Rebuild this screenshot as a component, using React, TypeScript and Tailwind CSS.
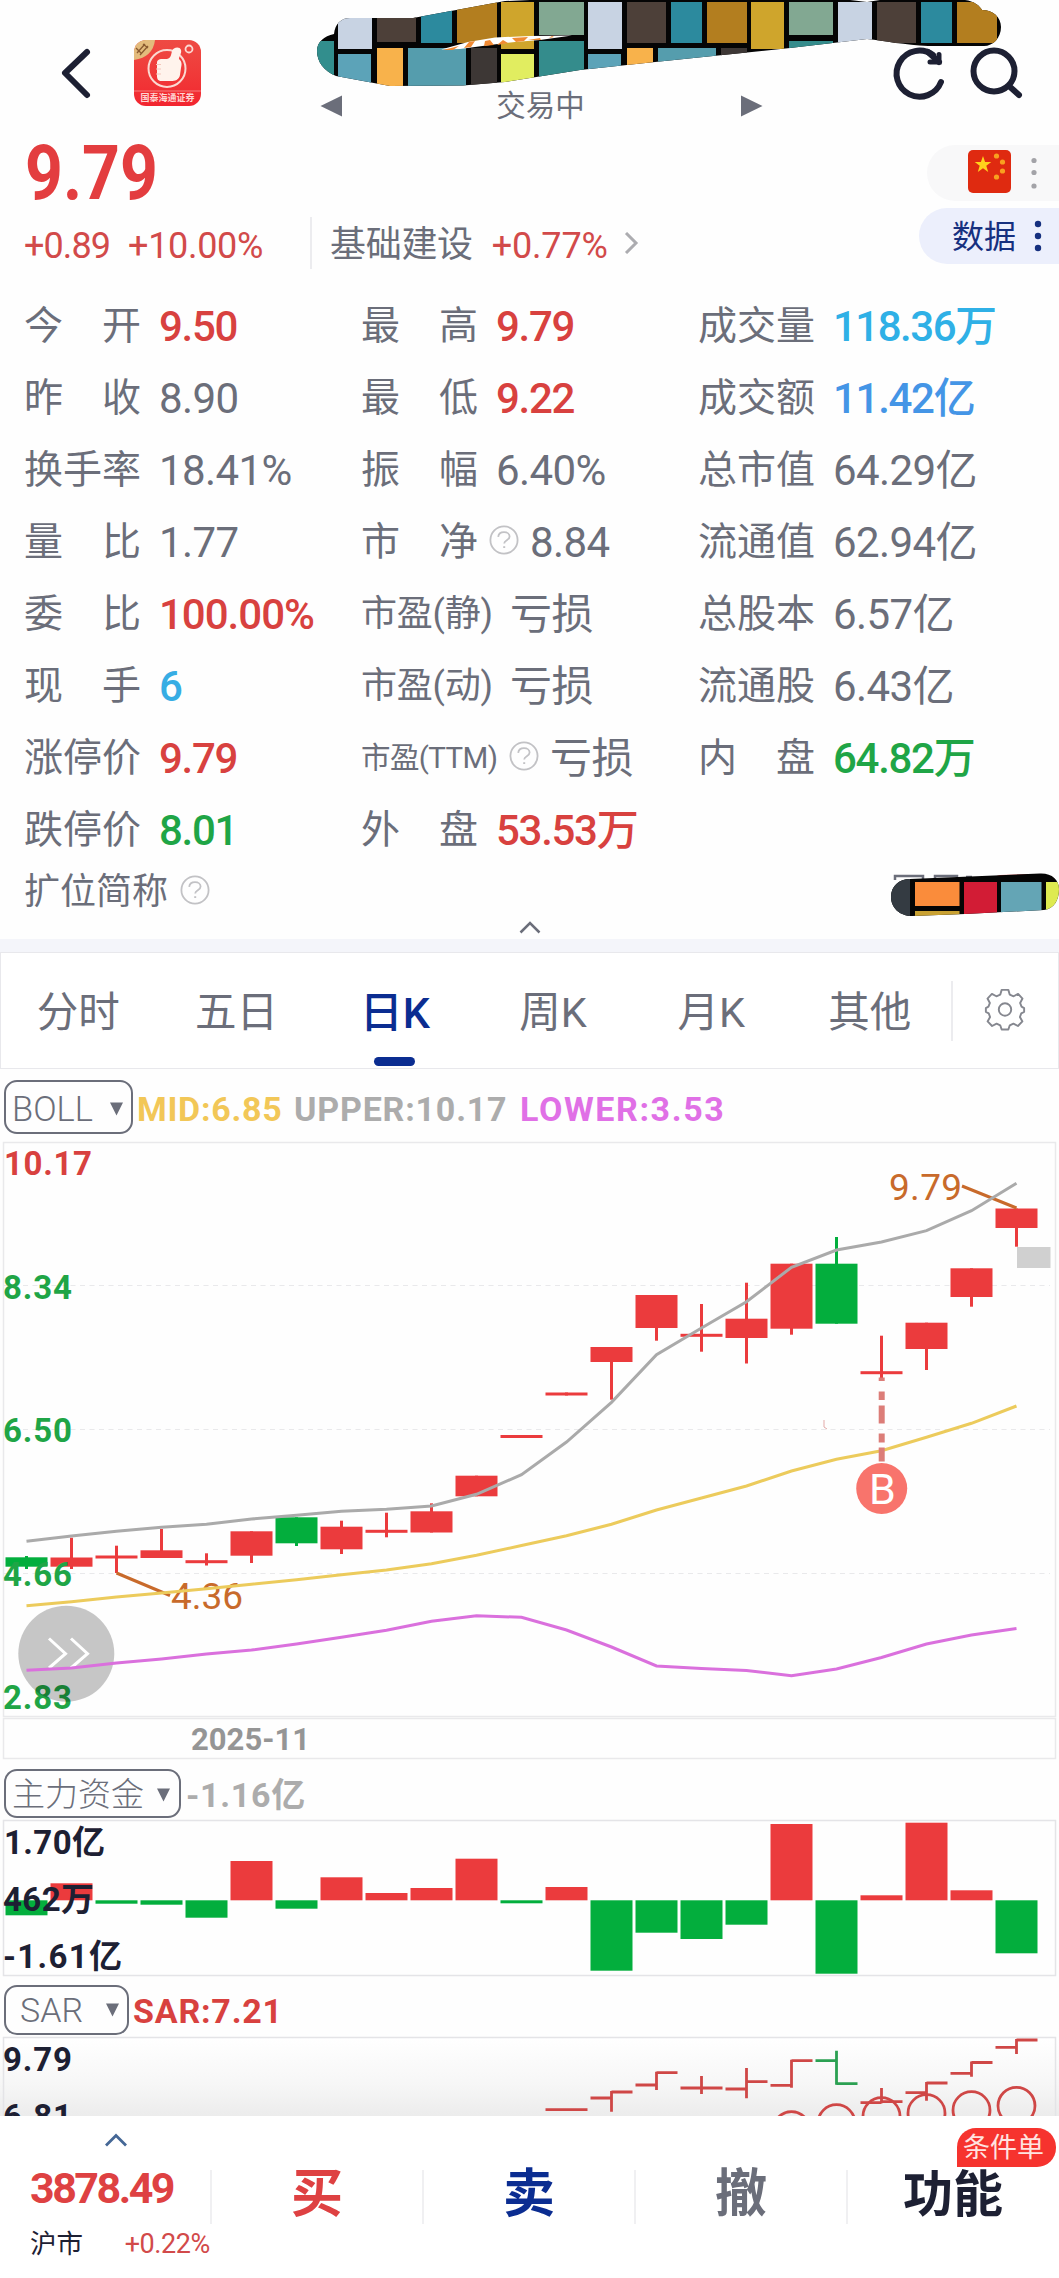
import React, { useState } from 'react';
import { clsx } from 'clsx';

const RED = '#eb3b3d';
const GREEN = '#03ae3d';

// ---------- quote data ----------
type Quote = { label: string; value: string; color?: string; help?: boolean; small?: string };

const red = 'text-[#d8413f] font-medium tracking-[-1.300px]';
const green = 'text-[#1fa546] font-medium tracking-[-1.300px]';

const quotes: Quote[][] = [
  [
    { label: '今开', value: '9.50', color: red },
    { label: '昨收', value: '8.90' },
    { label: '换手率', value: '18.41%' },
    { label: '量比', value: '1.77' },
    { label: '委比', value: '100.00%', color: 'text-[#d8413f] font-medium tracking-[-1px]' },
    { label: '现手', value: '6', color: 'text-[#37ade4] font-medium' },
    { label: '涨停价', value: '9.79', color: red },
    { label: '跌停价', value: '8.01', color: green },
  ],
  [
    { label: '最高', value: '9.79', color: red },
    { label: '最低', value: '9.22', color: red },
    { label: '振幅', value: '6.40%' },
    { label: '市净', value: '8.84', help: true },
    { label: '市盈(静)', value: '亏损', small: 'w-[131px] text-[36px] tracking-[-0.200px]' },
    { label: '市盈(动)', value: '亏损', small: 'w-[131px] text-[36px] tracking-[-0.200px]' },
    { label: '市盈(TTM)', value: '亏损', small: 'w-[137px] text-[29.500px] tracking-[-0.600px]', help: true },
    { label: '外盘', value: '53.53万', color: red },
  ],
  [
    { label: '成交量', value: '118.36万', color: 'text-[#2fb0e6] font-medium tracking-[-1.500px]' },
    { label: '成交额', value: '11.42亿', color: 'text-[#4495e6] font-medium tracking-[-1.300px]' },
    { label: '总市值', value: '64.29亿' },
    { label: '流通值', value: '62.94亿' },
    { label: '总股本', value: '6.57亿' },
    { label: '流通股', value: '6.43亿' },
    { label: '内盘', value: '64.82万', color: green },
  ],
];

// ---------- chart data, y values are in page pixels ----------
const cx = (i: number) => 26.5 + i * 45;

// [up, bodyTop, bodyBottom, wickTop, wickBottom]
const candles: [boolean, number, number, number, number][] = [
  [false, 1557.3, 1566.7, 1556, 1569],
  [true, 1557.5, 1566.7, 1537.7, 1569],
  [true, 1555.5, 1558.5, 1545.7, 1573],
  [true, 1550.3, 1558, 1529, 1558],
  [true, 1560.2, 1563.2, 1553.3, 1565.5],
  [true, 1531.3, 1555.7, 1531.3, 1563],
  [false, 1517.3, 1543.3, 1517.3, 1546],
  [true, 1526.7, 1549.3, 1520.7, 1554],
  [true, 1529.8, 1532.8, 1512.7, 1537.3],
  [true, 1511.3, 1532.5, 1503.3, 1532.5],
  [true, 1475.7, 1496.3, 1475.7, 1496.3],
  [true, 1435, 1438, 1435, 1438],
  [true, 1392.5, 1395.5, 1392.5, 1395.5],
  [true, 1347, 1362, 1347, 1399.7],
  [true, 1295, 1328, 1295, 1340.7],
  [true, 1333.8, 1336.8, 1304, 1351.7],
  [true, 1318.7, 1338, 1282.7, 1363.5],
  [true, 1263.7, 1328.7, 1263.7, 1334.7],
  [false, 1263.7, 1323.7, 1237, 1323.7],
  [true, 1371.2, 1374.2, 1335.7, 1378],
  [true, 1322.7, 1349, 1322.7, 1370],
  [true, 1268.3, 1297, 1268.3, 1306.7],
  [true, 1208.5, 1228, 1208.5, 1246.7],
];

const upper = [1541.3, 1536, 1531.3, 1527.3, 1524.3, 1519, 1515.3, 1511.3, 1509.3, 1506, 1494.3, 1474.7, 1442, 1402.3, 1354.7, 1328, 1301.7, 1267.3, 1250, 1242, 1230.7, 1210.7, 1183.3];
const mid = [1605.7, 1601.7, 1597, 1593, 1588.7, 1584.3, 1579.7, 1574.7, 1570, 1563.7, 1555.3, 1545.5, 1535.7, 1524.2, 1510, 1498, 1486, 1471, 1459.3, 1450.7, 1437.3, 1423.3, 1406];
const lower = [1670.3, 1668, 1663, 1659, 1654, 1650, 1644, 1637.3, 1630.3, 1621.3, 1615.7, 1617.3, 1630, 1647, 1666, 1668.5, 1670.6, 1675.7, 1669, 1657.5, 1644, 1635, 1628.5];

const ZERO = 1900.3;
const funds = [1915.3, 1883.3, 1903.7, 1904.7, 1917.7, 1861, 1908.7, 1877.3, 1893, 1888, 1858.7, 1903.3, 1887, 1970.7, 1932.7, 1939, 1924.7, 1824, 1973.7, 1895.3, 1822.7, 1890.3, 1953.3];

// [index, up, open, close, high, low]
const ohlc: [number, boolean, number, number, number, number][] = [
  [12, true, 2109.7, 2109.7, 2109, 2110],
  [13, true, 2098, 2092, 2091, 2111.7],
  [14, true, 2085, 2072.7, 2071.7, 2090],
  [15, true, 2088, 2088, 2076, 2094],
  [16, true, 2089, 2081.7, 2068, 2098.3],
  [17, true, 2085.3, 2060.7, 2059.7, 2087.7],
  [18, false, 2060.7, 2083.7, 2050.7, 2084.7],
  [19, true, 2102.7, 2101.7, 2088, 2103.3],
  [20, true, 2092.7, 2083, 2082, 2100.7],
  [21, true, 2073.3, 2062.5, 2061.5, 2076.7],
  [22, true, 2047.3, 2040, 2039, 2054],
];
const sar: [number, number][] = [[17, 2111.7], [18, 2104.7], [19, 2097.7], [20, 2094.7], [21, 2091.7], [22, 2087.3]];

const toPoints = (ys: number[]) => ys.map((y, i) => `${cx(i)},${y}`).join(' ');

// mosaic strip: [x1, x2, y1, y2, color]
const tiles: [number, number, number, number, string][] = [
  [310, 334, 41, 80, '#328e8d'],
  [338, 372, 10, 49, '#c8d3e3'],
  [338, 371, 54, 90, '#5ca3b8'],
  [377, 416, 10, 42, '#4d4039'],
  [377, 403, 48, 90, '#f8b24b'],
  [421, 452, 2, 43, '#2c8a9e'],
  [408, 466, 48, 90, '#559dad'],
  [457, 497, 2, 43, '#b37e1f'],
  [471, 497, 48, 90, '#3d3735'],
  [501, 534, 2, 49, '#cfa52c'],
  [501, 534, 54, 90, '#e1ed60'],
  [539, 584, 2, 35, '#82a892'],
  [539, 584, 41, 80, '#348c8c'],
  [588, 622, 2, 49, '#c8d3e3'],
  [588, 621, 54, 80, '#5ca3b8'],
  [627, 666, 2, 43, '#4d4039'],
  [627, 653, 48, 80, '#f8b24b'],
  [671, 702, 2, 43, '#2c8a9e'],
  [658, 716, 48, 80, '#559dad'],
  [707, 747, 2, 43, '#b37e1f'],
  [721, 747, 48, 80, '#3d3735'],
  [751, 784, 2, 49, '#cfa52c'],
  [789, 833, 2, 35, '#82a892'],
  [789, 833, 41, 60, '#348c8c'],
  [838, 872, 2, 49, '#c8d3e3'],
  [877, 916, 2, 43, '#4d4039'],
  [921, 952, 2, 43, '#2c8a9e'],
  [957, 997, 2, 43, '#b37e1f'],
];

function HelpIcon() {
  return (
    <svg width="30" height="30" viewBox="0 0 30 30" fill="none" stroke="#c2c2c5" strokeWidth="1.8" className="shrink-0">
      <circle cx="15" cy="15" r="13.6" />
      <path d="M9.2 11.8C9.6 8.6 12 7.2 15 7.2c3.200 0 5.600 1.700 5.600 4.300 0 3.800-5.400 3.600-5.400 7" />
      <path d="M15.200 21.200v1.800" strokeWidth="2" />
    </svg>
  );
}

function Mosaic() {
  return (
    <svg className="absolute left-0 top-0" width="1059" height="90" viewBox="0 0 1059 90">
      <clipPath id="strip">
        <path d="M317 51C317 42 324 36 334 34C335 24 341 18 350 18H413L505 1L530 0H850L867 2L880 0H965C974 1 980 6 982 10C993 10 1001 17 1001 27C1001 38 993 46 984 46H928C905 45 885 41 867 39L790 48L655 62L580 70L530 78L505 82L463 85.500L390 86L336 76C324 71 317 62 317 51Z" />
      </clipPath>
      <g clipPath="url(#strip)">
        <rect x="300" width="720" height="90" fill="#050505" />
        {tiles.map(([x1, x2, y1, y2, c]) => (
          <rect key={`${x1}-${y1}`} x={x1} y={y1} width={x2 - x1} height={y2 - y1} fill={c} />
        ))}
      </g>
      <path d="M441 49.500L468 42L495 37.500L530 36L572 35.500L540 40L515 42L490 45L460 49Z" fill="#fff" />
      <path d="M443 50l16-4-6 4zM464 48l5-6 6-1-4 6zM484 46l1-5 5-1 4 5zM497 45l6-5 5 3-5 1zM512 38l16-1-4 4-8 1zM528 40l12-2 1 2zM549 38l5-1-2-1z" fill="#f08a34" />
    </svg>
  );
}

function Header() {
  return (
    <header className="relative flex h-[128px] items-start">
      <svg className="ml-[58px] mt-[40px]" width="40" height="66" viewBox="0 0 40 66" fill="none" stroke="#1d2033" strokeWidth="6" strokeLinecap="round" strokeLinejoin="round">
        <path d="M29 12L7 33L29 55" />
      </svg>
      <div className="relative ml-[36px] mt-[40px] h-[66px] w-[67px] overflow-hidden rounded-[12px] bg-linear-to-b from-[#ee4a43] to-[#f2242f]">
        <svg width="67" height="66" viewBox="0 0 67 66">
          <path d="M0 0H21Q19 17 0 20Z" fill="#e3bb7c" />
          <path d="M3 13l8-9M6 15l8-9M2 8l5 5M9 4l5 4" stroke="#8a5a30" strokeWidth="1.300" />
          <circle cx="33" cy="28.500" r="18.500" fill="none" stroke="#fbd9d2" strokeWidth="2" />
          <path d="M23 23c0-3 2-4 5-4h5c4-1 4-4 5-8 1-4 8-5 9-1 1 3-2 6-2 9 3 3 3 5 2 9l-1 7c-1 5-5 6-9 6H28c-4 0-5-2-5-5z" fill="#fff3ec" />
          <path d="M22 24.500h5M22 29h5M22 34h5" stroke="#f3c6bb" strokeWidth="1" />
          <circle cx="55" cy="9" r="3.500" fill="none" stroke="#fbd9d2" strokeWidth="1.800" />
          <path d="M0 51H67" stroke="#f77f7c" strokeWidth="1" />
        </svg>
        <span className="absolute inset-x-0 bottom-[2px] text-center text-[9px] font-bold leading-[11px] text-[#ffd5d2]">国泰海通证券</span>
      </div>
      <div className="ml-[119px] mt-[86px] flex h-[40px] w-[443px] items-center justify-between">
        <svg width="22" height="22" viewBox="0 0 22 22"><path d="M0.500 11L22 0.500V21.500Z" fill="#6b6e7a" /></svg>
        <span className="pr-[2px] text-[29.500px] leading-[40px] text-[#6b6e7a]">交易中</span>
        <svg width="22" height="22" viewBox="0 0 22 22"><path d="M21.500 11L0 0.500V21.500Z" fill="#6b6e7a" /></svg>
      </div>
      <svg className="ml-[125px] mt-[42px]" width="150" height="62" viewBox="0 0 150 62" fill="none" stroke="#1d2033" strokeWidth="6" strokeLinecap="round">
        <path d="M53 40A23 23 0 1 1 45 13" />
        <path d="M51 12.500V20H42" strokeLinecap="round" strokeLinejoin="miter" strokeWidth="5" />
        <path d="M40 10L51 20" strokeWidth="6" />
        <circle cx="106" cy="29" r="20.500" />
        <path d="M121 44L131 53" />
      </svg>
      <Mosaic />
    </header>
  );
}

function Summary() {
  return (
    <section className="flex h-[160px] justify-between">
      <div>
        <div className="ml-[25px] h-[84px] origin-left scale-x-[0.87] text-[76px] font-bold leading-[90px] text-[#e33d3f]">9.79</div>
        <div className="ml-[24px] mt-[5px] flex h-[52px] items-center text-[36px] leading-[52px] tracking-[-0.900px] text-[#d24a4a]">
          <span className="w-[104px] pt-[5px]">+0.89</span>
          <span className="w-[182px] pt-[5px] tracking-[-0.300px]">+10.00%</span>
          <span className="h-[52px] w-[2px] bg-[#ececef]" />
          <span className="ml-[18px] pt-[4px] text-[36px] tracking-[-0.300px] text-[#6b6e7a]">基础建设</span>
          <span className="ml-[19px] pt-[5px] tracking-[-0.200px]">+0.77%</span>
          <svg className="ml-[15px]" width="16" height="22" viewBox="0 0 16 22" fill="none" stroke="#acacb0" strokeWidth="3"><path d="M3 1L13 11L3 21" /></svg>
        </div>
      </div>
      <div className="flex flex-col items-end gap-[7px] pt-[17px]">
        <div className="flex h-[56px] w-[132px] items-center rounded-l-full bg-[#f8f8f9] pl-[41px]">
          <svg className="-mt-[3px]" width="43" height="43" viewBox="0 0 43 43">
            <rect width="43" height="43" rx="5" fill="#df2a10" />
            <path d="M15 6l2.100 6h6.200l-5 3.800 1.900 6.200-5.200-3.700-5.200 3.700 1.900-6.200-5-3.800h6.200z" fill="#ffd21c" />
            <g fill="#f9a01f">
              <circle cx="28.500" cy="6" r="2.600" /><circle cx="34.500" cy="12" r="2.600" /><circle cx="34.500" cy="21" r="2.600" /><circle cx="28.500" cy="27" r="2.600" />
            </g>
          </svg>
          <svg className="ml-[19px]" width="8" height="32" viewBox="0 0 8 32" fill="#a3a3a8"><circle cx="4" cy="3.500" r="2.600" /><circle cx="4" cy="15.500" r="2.600" /><circle cx="4" cy="29" r="2.600" /></svg>
        </div>
        <div className="flex h-[56px] w-[140px] items-center rounded-l-full bg-[#eceffc] pl-[33px]">
          <span className="pt-[1px] text-[32px] leading-[56px] text-[#16307f]">数据</span>
          <svg className="ml-[18px]" width="8" height="32" viewBox="0 0 8 32" fill="#16307f"><circle cx="4" cy="4" r="3.200" /><circle cx="4" cy="16" r="3.200" /><circle cx="4" cy="28" r="3.200" /></svg>
        </div>
      </div>
    </section>
  );
}

function QuoteCell({ q }: { q: Quote }) {
  return (
    <div className="flex h-[72px] items-center text-[#6b6e7a]">
      {q.small ? (
        <span className={clsx('whitespace-nowrap pt-[4px]', q.small)}>{q.label}</span>
      ) : (
        <span className="flex w-[117px] justify-between pt-[4px] text-[39px]">
          {q.label.split('').map(ch => <span key={ch}>{ch}</span>)}
        </span>
      )}
      {q.help && <span className="ml-[11px]"><HelpIcon /></span>}
      <span className={clsx('whitespace-nowrap pt-[4px] text-[42px]', q.help ? 'ml-[11px]' : 'ml-[18px]', q.color || 'tracking-[-0.600px]')}>{q.value}</span>
    </div>
  );
}

function Tabs() {
  const [active, setActive] = useState('日K');
  return (
    <nav className="flex h-[117px] items-center border border-[#e8e8ec] bg-white">
      {['分时', '五日', '日K', '周K', '月K', '其他'].map(t => (
        <button
          key={t}
          onClick={() => setActive(t)}
          className={clsx('relative h-full w-[158.300px] pr-[4px] pt-[5px]', t === active ? 'text-[43px] font-medium text-[#0b2d91]' : 'text-[41.500px] text-[#6b6e7a]')}
        >
          {t}
          {t === active && <span className="absolute bottom-[2px] left-[56px] h-[9px] w-[41px] rounded-full bg-[#0b2d91]" />}
        </button>
      ))}
      <span className="h-[60px] w-[2px] bg-[#ececef]" />
      <svg className="-mt-[3px] ml-[30px]" width="44" height="44" viewBox="0 0 46 46" fill="none" stroke="#85878f" strokeWidth="2" strokeLinejoin="round">
        <path d="M19.500 3h7l1.500 5 4 1.700 4.700-2.500 4.600 4.900-2.500 4.600 1.500 3.800 2.700 1.500v4l-3 1.500-1.400 3.900 2.600 4.600-4.700 4.800-4.700-2.500-3.800 1.700-1.500 4.500h-7l-1.500-4.500-3.800-1.700-4.700 2.500-4.700-4.800 2.600-4.600-1.400-3.900-3-1.500v-4l2.700-1.500 1.500-3.800-2.500-4.600 4.600-4.900 4.700 2.500 4-1.700z" />
        <circle cx="23" cy="23.500" r="6.500" />
      </svg>
    </nav>
  );
}

function Picker({ label, className }: { label: string; className: string }) {
  return (
    <button className={clsx('flex items-center justify-between rounded-[13px] border-2 border-[#6b6e7a] text-[#6b6e7a]', className)}>
      <span>{label}</span>
      <svg width="13" height="14" viewBox="0 0 13 14" fill="#6b6e7a"><path d="M0 0.500H13L6.500 13.500Z" /></svg>
    </button>
  );
}

function KChart() {
  return (
    <svg className="block" width="1059" height="626" viewBox="0 1137 1059 626">
      <g fill="none" stroke="#e9e9eb" strokeWidth="1.500">
        <rect x="3.500" y="1142.500" width="1052" height="574" />
        <rect x="3.500" y="1718.500" width="1052" height="40" />
        <path d="M4 1285.500H1050M4 1429.500H1050M4 1573.500H1050" strokeDasharray="5 4.500" strokeWidth="1" />
      </g>
      {candles.map(([up, top, bottom, high, low], i) => (
        <g key={i} fill={up ? RED : GREEN}>
          <rect x={cx(i) - 1.500} y={high} width="3" height={low - high} />
          <rect x={cx(i) - 21} y={top} width="42" height={bottom - top} />
        </g>
      ))}
      <g fontSize="33" fontWeight="700" fill="#1fa546">
        <text x="4" y="1175" fill="#d8413f" textLength="88">10.17</text>
        <text x="3" y="1298.500" textLength="69">8.34</text>
        <text x="3" y="1441.500" textLength="69">6.50</text>
        <text x="3" y="1585.500" textLength="69">4.66</text>
        <text x="3" y="1708.500" textLength="69">2.83</text>
      </g>
      <g fontSize="37" fill="#c86a2b">
        <text x="889" y="1199.500" textLength="73">9.79</text>
        <text x="171" y="1608.500" textLength="72">4.36</text>
        <path d="M962 1186L1016.500 1208M116.500 1573L170 1595.500" stroke="#c86a2b" strokeWidth="3" />
      </g>
      <rect x="1017" y="1247" width="33.500" height="21" fill="#d0d0d0" />
      <circle cx="66.300" cy="1653.700" r="48" fill="#000" fillOpacity="0.220" />
      <path d="M49 1638.500L65.500 1653.700L49 1668M71 1638.500L87.500 1653.700L71 1668" fill="none" stroke="#fff" strokeWidth="3" />
      <g fill="none" strokeWidth="3">
        <polyline points={toPoints(upper)} stroke="#aaaaaa" />
        <polyline points={toPoints(mid)} stroke="#eccb5c" />
        <polyline points={toPoints(lower)} stroke="#da70dd" />
      </g>
      {/* buy marker */}
      <path d="M881.700 1377.500V1381M881.700 1391.500V1400M881.700 1405.500V1423.500M881.700 1433.500V1442.500M881.700 1447.500V1461.500" stroke="#dc7d78" strokeWidth="6" />
      <circle cx="881.700" cy="1488.500" r="25.500" fill="#f8746c" />
      <text x="882.500" y="1504" fontSize="43" fill="#fff" textAnchor="middle">B</text>
      <path d="M824 1420V1427L827 1429" fill="none" stroke="#e3aaa8" strokeWidth="1" />
      <text x="191" y="1749.500" fontSize="31" fontWeight="700" fill="#959595" textLength="119">2025-11</text>
    </svg>
  );
}

function FundsChart() {
  return (
    <svg className="block" width="1059" height="160" viewBox="0 1819 1059 160">
      <rect x="3.500" y="1820.500" width="1052" height="155" fill="none" stroke="#e4e4e7" strokeWidth="1.500" />
      {funds.map((y, i) => (
        <rect key={i} x={cx(i) - 21} y={Math.min(y, ZERO)} width="42" height={Math.abs(y - ZERO)} fill={y < ZERO ? RED : GREEN} />
      ))}
      <g fontSize="33" fontWeight="700" fill="#1d2033">
        <text x="4" y="1853.500" textLength="101">1.70亿</text>
        <text x="3" y="1910.500" textLength="91">462万</text>
        <text x="3" y="1967.500" textLength="119">-1.61亿</text>
      </g>
    </svg>
  );
}

function SarChart() {
  return (
    <svg className="block" width="1059" height="80" viewBox="0 2036 1059 80">
      <defs>
        <linearGradient id="fade" x1="0" y1="0" x2="0" y2="1">
          <stop offset="0" stopColor="#fff" />
          <stop offset="0.600" stopColor="#f6f6f6" />
          <stop offset="1" stopColor="#ebebeb" />
        </linearGradient>
      </defs>
      <rect x="0" y="2038" width="1059" height="80" fill="url(#fade)" />
      <rect x="3.500" y="2037.500" width="1052" height="120" fill="none" stroke="#e4e4e7" strokeWidth="1.500" />
      <g fill="none" strokeWidth="2.800">
        {ohlc.map(([i, up, open, close, high, low]) => (
          <path
            key={i}
            d={`M${cx(i) - 21} ${open}H${cx(i)}M${cx(i)} ${high}V${low}M${cx(i)} ${close}H${cx(i) + 21}`}
            stroke={up ? '#cf4746' : '#2ba052'}
          />
        ))}
        {sar.map(([i, top]) => (
          <circle key={i} cx={cx(i)} cy={top + 18.500} r="18.500" stroke="#cf4746" />
        ))}
      </g>
      <g fontSize="33" fontWeight="700" fill="#1d2033">
        <text x="3" y="2070.500" textLength="69">9.79</text>
        <text x="3" y="2127.500" textLength="69">6.81</text>
      </g>
    </svg>
  );
}

function BottomBar() {
  return (
    <footer className="flex h-[162px] bg-white">
      <div className="flex w-[210px] flex-col pl-[30px] pt-[17px]">
        <svg className="ml-[75px]" width="22" height="14" viewBox="0 0 22 14" fill="none" stroke="#456796" strokeWidth="2.800"><path d="M1 12.500L11 2.500L21 12.500" /></svg>
        <span className="mt-[16px] text-[43px] font-bold leading-[50px] tracking-[-2.500px] text-[#de4142]">3878.49</span>
        <span className="mt-[11px] flex items-center justify-between leading-[40px]">
          <span className="text-[26.500px] text-[#1d2033]">沪市</span>
          <span className="text-[27px] tracking-[-0.400px] text-[#d24a4a]">+0.22%</span>
        </span>
      </div>
      {[
        ['买', 'text-[#de4142]'],
        ['卖', 'text-[#0b2d91]'],
        ['撤', 'text-[#6b6e7a]'],
        ['功能', 'text-[#1d2033]'],
      ].map(([t, c]) => (
        <div key={t} className="relative flex w-[212px] pt-[54px]">
          <span className="h-[54px] w-[2px] bg-[#f0f0f2]" />
          <button className={clsx('h-[50px] flex-1 font-bold leading-[50px]', t === '功能' ? 'text-[50px]' : 'text-[52px]', c)}>{t}</button>
          {t === '功能' && (
            <span className="absolute left-[111px] top-[12px] h-[39px] w-[99px] rounded-[19px] rounded-bl-none bg-[#f6332e] pl-[6px] text-[27px] leading-[41px] text-[#ffe3e0]">条件单</span>
          )}
        </div>
      ))}
    </footer>
  );
}

export default function App() {
  return (
    <div className="h-[2278px] w-[1059px] overflow-hidden bg-[#fefefe] font-['Roboto','Noto_Sans_CJK_SC',sans-serif]">
      <Header />
      <Summary />

      {/* quote table */}
      <section className="flex h-[576px] pl-[24px]">
        {quotes.map((col, i) => (
          <div key={i} className="w-[337px] shrink-0">
            {col.map(q => <QuoteCell key={q.label} q={q} />)}
          </div>
        ))}
      </section>
      <div className="flex h-[52px] items-center pl-[24px]">
        <span className="w-[156px] pt-[3px] text-[36px] leading-[52px] text-[#6b6e7a]">扩位简称</span>
        <HelpIcon />
        <svg className="ml-auto mt-[12px]" width="170" height="46" viewBox="889 873 170 46">
          <path d="M895 880V876H923V880M935 880V876H957V880M966 877H972M978 880V877" fill="none" stroke="#6b6e7a" strokeWidth="2.500" />
          <path d="M982 880L1000 875L1033 874L1036 879Z" fill="#cf4746" />
          <clipPath id="tag"><path d="M891 897C891 886 899 879 910 879L1040 873.500C1052 873 1059 880 1059 889C1059 900 1054 909 1044 910L965 914L912 916C900 916 891 908 891 897Z" /></clipPath>
          <g clipPath="url(#tag)">
            <rect x="889" y="870" width="170" height="50" fill="#050505" />
            <rect x="889" y="870" width="21" height="50" fill="#343b42" />
            <rect x="915" y="882" width="44.500" height="24" fill="#fa8c3b" />
            <rect x="915" y="911" width="44.500" height="8" fill="#c9a132" />
            <rect x="964" y="882" width="33" height="36" fill="#d21c35" />
            <rect x="1001" y="882" width="40.500" height="36" fill="#64a5b5" />
            <rect x="1046" y="882" width="14" height="36" fill="#deea50" />
          </g>
        </svg>
      </div>
      <div className="flex h-[23px] justify-center pt-[5px]">
        <svg width="22" height="13" viewBox="0 0 22 13" fill="none" stroke="#6b6e7a" strokeWidth="2.500"><path d="M1.500 11.500L11 2L20.500 11.500" /></svg>
      </div>
      <div className="h-[13px] bg-[#f4f5fa]" />

      <Tabs />

      <div className="flex h-[68px] items-start pl-[4px] pt-[11px] text-[34px] font-bold leading-[58px]">
        <Picker label="BOLL" className="h-[54px] w-[129px] pl-[6px] pr-[8px] pt-[4px] text-[34.500px] font-light" />
        <span className="w-[157px] pl-[4px] tracking-[0.700px] text-[#f2c757]">MID:6.85</span>
        <span className="w-[225px] pl-[4px] tracking-[0.800px] text-[#acacac]">UPPER:10.17</span>
        <span className="pl-[5px] tracking-[1.600px] text-[#e070e6]">LOWER:3.53</span>
      </div>
      <KChart />

      <div className="flex h-[56px] items-start pl-[4px] pt-[6px] text-[34px] font-bold leading-[52px]">
        <Picker label="主力资金" className="h-[49px] w-[177px] pl-[6px] pr-[9px] pt-[2px] text-[33px] font-light" />
        <span className="pl-[5px] tracking-[0.700px] text-[#acacac]">-1.16亿</span>
      </div>
      <FundsChart />

      <div className="flex h-[57px] items-start pl-[4px] pt-[6px] text-[34px] font-bold leading-[52px]">
        <Picker label="SAR" className="h-[50px] w-[125px] pl-[14px] pr-[8px] text-[34px] font-light" />
        <span className="pl-[4px] tracking-[0.800px] text-[#d8413f]">SAR:7.21</span>
      </div>
      <SarChart />
      <BottomBar />
    </div>
  );
}
